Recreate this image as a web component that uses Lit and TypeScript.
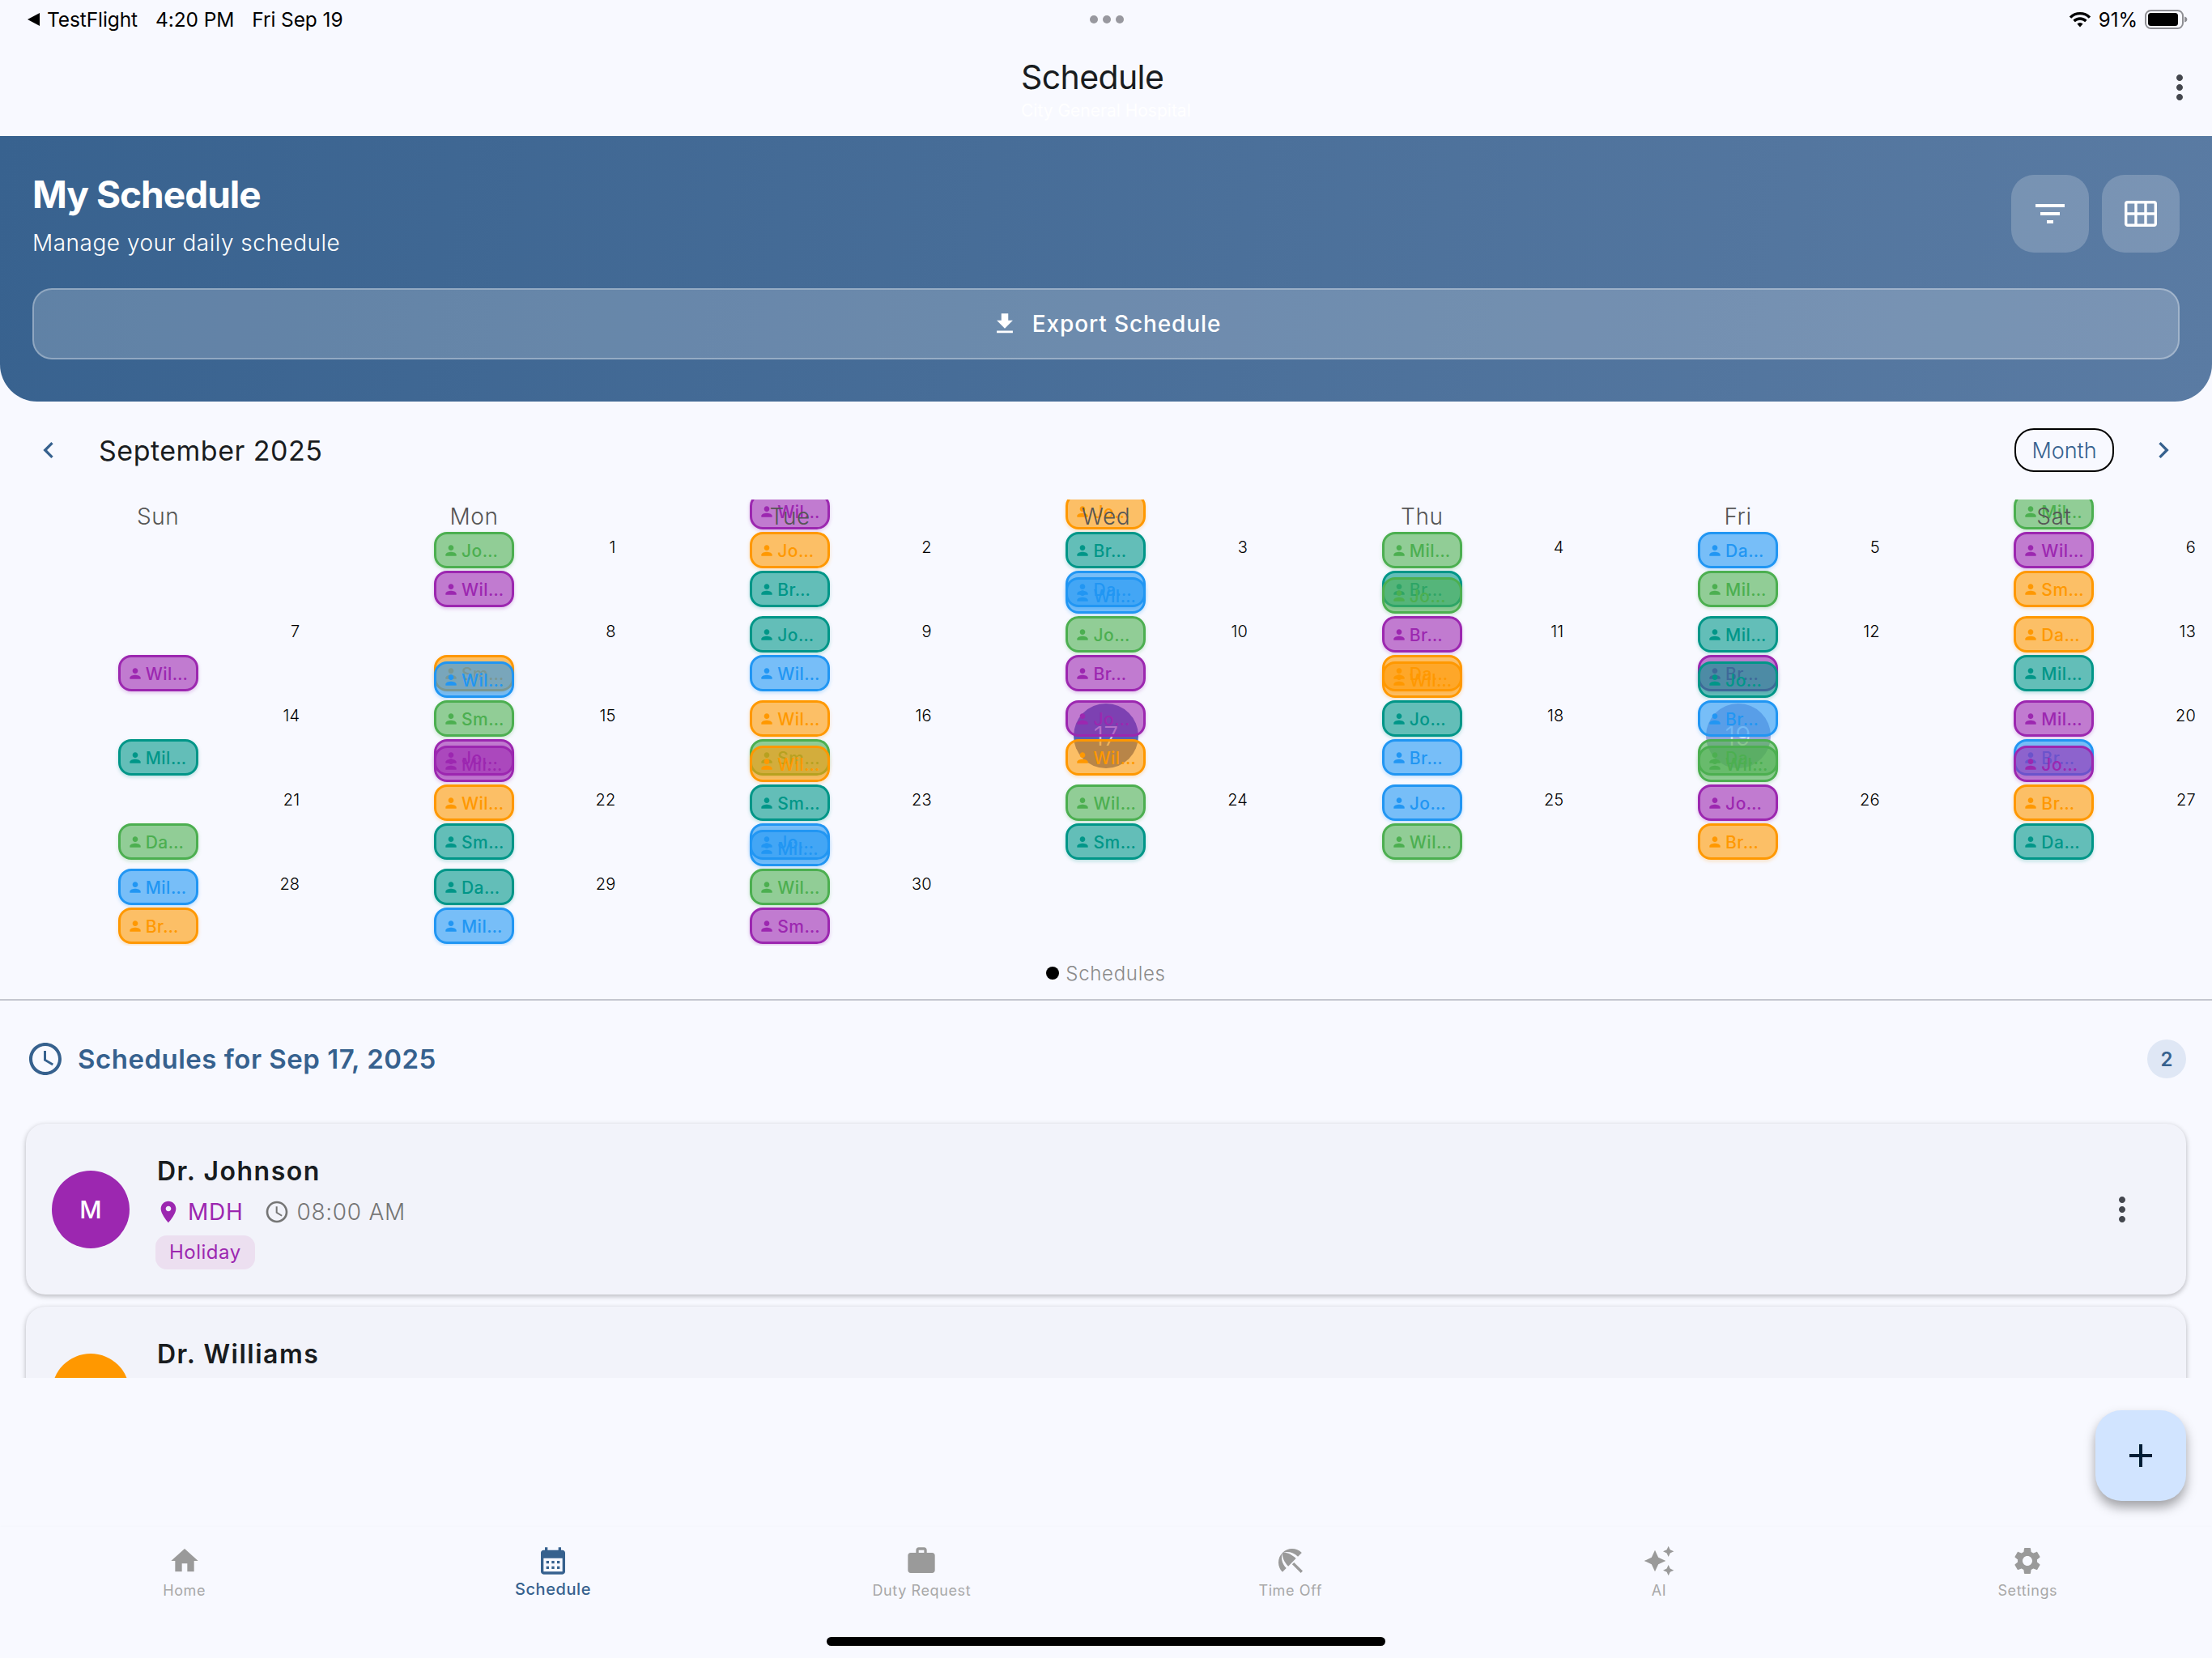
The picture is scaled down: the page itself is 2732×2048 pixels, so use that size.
import { LitElement, html, css } from "lit";
import { customElement } from "lit/decorators.js";

const P = {
  home: "M10 20v-6h4v6h5v-8h3L12 3 2 12h3v8z",
  cal: "M19 4h-1V2h-2v2H8V2H6v2H5c-1.11 0-1.99.9-1.99 2L3 20c0 1.1.89 2 2 2h14c1.1 0 2-.9 2-2V6c0-1.1-.9-2-2-2zm0 16H5V10h14v10zM9 14H7v-2h2v2zm4 0h-2v-2h2v2zm4 0h-2v-2h2v2zm-8 4H7v-2h2v2zm4 0h-2v-2h2v2zm4 0h-2v-2h2v2z",
  work: "M20 6h-4V4c0-1.11-.89-2-2-2h-4c-1.11 0-2 .89-2 2v2H4c-1.11 0-1.99.89-1.99 2L2 19c0 1.11.89 2 2 2h16c1.11 0 2-.89 2-2V8c0-1.11-.89-2-2-2zm-6 0h-4V4h4v2z",
  beach: "M13.127 14.56l1.43-1.43 6.44 6.443L19.57 21zm4.293-5.73l2.86-2.86c-3.95-3.95-10.35-3.96-14.3-.02 3.93-1.3 8.31-.25 11.44 2.88zM5.95 5.98c-3.94 3.95-3.93 10.35.02 14.3l2.86-2.86C5.7 14.29 4.65 9.91 5.95 5.98zm.02-.02l-.01.01c-.38 3.01 1.17 6.88 4.3 10.02l5.73-5.73c-3.13-3.13-7.01-4.68-10.02-4.3z",
  ai: "M19 9l1.25-2.75L23 5l-2.75-1.25L19 1l-1.25 2.75L15 5l2.75 1.25L19 9zm-7.5.5L9 4 6.5 9.5 1 12l5.5 2.5L9 20l2.5-5.5L17 12l-5.5-2.5zM19 15l-1.25 2.75L15 19l2.75 1.25L19 23l1.25-2.75L23 19l-2.75-1.25L19 15z",
  gear: "M19.14 12.94c.04-.3.06-.61.06-.94 0-.32-.02-.64-.07-.94l2.03-1.58c.18-.14.23-.41.12-.61l-1.92-3.32c-.12-.22-.37-.29-.59-.22l-2.39.96c-.5-.38-1.03-.7-1.62-.94l-.36-2.54c-.04-.24-.24-.41-.48-.41h-3.84c-.24 0-.43.17-.47.41l-.36 2.54c-.59.24-1.13.57-1.62.94l-2.39-.96c-.22-.08-.47 0-.59.22L2.74 8.87c-.12.21-.08.47.12.61l2.03 1.58c-.05.3-.09.63-.09.94s.02.64.07.94l-2.03 1.58c-.18.14-.23.41-.12.61l1.92 3.32c.12.22.37.29.59.22l2.39-.96c.5.38 1.03.7 1.62.94l.36 2.54c.05.24.24.41.48.41h3.84c.24 0 .44-.17.47-.41l.36-2.54c.59-.24 1.13-.56 1.62-.94l2.39.96c.22.08.47 0 .59-.22l1.92-3.32c.12-.22.07-.47-.12-.61l-2.01-1.58zM12 15.6c-1.98 0-3.6-1.62-3.6-3.6s1.62-3.6 3.6-3.6 3.6 1.62 3.6 3.6-1.62 3.6-3.6 3.6z",
  person: "M12 12c2.21 0 4-1.79 4-4s-1.79-4-4-4-4 1.79-4 4 1.79 4 4 4zm0 2c-2.67 0-8 1.34-8 4v2h16v-2c0-2.66-5.33-4-8-4z",
  filter: "M10 18h4v-2h-4v2zM3 6v2h18V6H3zm3 7h12v-2H6v2z",
  download: "M5 20h14v-2H5v2zM19 9h-4V3H9v6H5l7 7 7-7z",
  pin: "M12 2C8.13 2 5 5.13 5 9c0 5.25 7 13 7 13s7-7.75 7-13c0-3.87-3.13-7-7-7zm0 9.5c-1.38 0-2.5-1.12-2.5-2.5s1.12-2.5 2.5-2.5 2.5 1.12 2.5 2.5-1.12 2.5-2.5 2.5z",
  clock: "M11.99 2C6.47 2 2 6.48 2 12s4.47 10 9.99 10C17.52 22 22 17.52 22 12S17.52 2 11.99 2zM12 20c-4.42 0-8-3.58-8-8s3.58-8 8-8 8 3.58 8 8-3.58 8-8 8zm.5-13H11v6l5.25 3.15.75-1.23-4.5-2.67z",
  more: "M12 8c1.1 0 2-.9 2-2s-.9-2-2-2-2 .9-2 2 .9 2 2 2zm0 2c-1.1 0-2 .9-2 2s.9 2 2 2 2-.9 2-2-.9-2-2-2zm0 6c-1.1 0-2 .9-2 2s.9 2 2 2 2-.9 2-2-.9-2-2-2z",
  left: "M15.41 7.41L14 6l-6 6 6 6 1.41-1.41L10.83 12z",
  right: "M10 6L8.59 7.41 13.17 12l-4.58 4.59L10 18l6-6z",
  plus: "M19 13h-6v6h-2v-6H5v-2h6V5h2v6h6v2z",
};

function icon(d: string, size: number) {
  return html`<svg class="ic" width=${size} height=${size} viewBox="0 0 24 24" fill="currentColor"><path d=${d}></path></svg>`;
}

const COLORS: Record<string, string> = { p: "purple", g: "green", t: "teal", b: "blue", o: "orange" };

// Each cell: "offset:label:colour" entries, rows of the month from top to bottom.
const MONTH: { day: number | null; chips: string[]; mark?: "selected" | "today" }[][] = [
  [
    { day: null, chips: [] },
    { day: 7, chips: ["48:Wil:p"] },
    { day: 14, chips: ["48:Mil:t"] },
    { day: 21, chips: ["48:Da:g"] },
    { day: 28, chips: ["0:Mil:b", "48:Br:o"] },
  ],
  [
    { day: 1, chips: ["0:Jo:g", "48:Wil:p"] },
    { day: 8, chips: ["48:Sm:o", "56:Wil:b"] },
    { day: 15, chips: ["0:Sm:g", "48:Jo:p", "56:Mil:p"] },
    { day: 22, chips: ["0:Wil:o", "48:Sm:t"] },
    { day: 29, chips: ["0:Da:t", "48:Mil:b"] },
  ],
  [
    { day: 2, chips: ["-48:Wil:p", "0:Jo:o", "48:Br:t"] },
    { day: 9, chips: ["0:Jo:t", "48:Wil:b"] },
    { day: 16, chips: ["0:Wil:o", "48:Sm:g", "56:Wil:o"] },
    { day: 23, chips: ["0:Sm:t", "48:Jo:b", "56:Mil:b"] },
    { day: 30, chips: ["0:Wil:g", "48:Sm:p"] },
  ],
  [
    { day: 3, chips: ["-48:Jo:o", "0:Br:t", "48:Da:b", "56:Wil:b"] },
    { day: 10, chips: ["0:Jo:g", "48:Br:p"] },
    { day: 17, chips: ["0:Jo:p", "48:Wil:o"], mark: "selected" },
    { day: 24, chips: ["0:Wil:g", "48:Sm:t"] },
    { day: null, chips: [] },
  ],
  [
    { day: 4, chips: ["0:Mil:g", "48:Br:t", "56:Jo:g"] },
    { day: 11, chips: ["0:Br:p", "48:Da:o", "56:Wil:o"] },
    { day: 18, chips: ["0:Jo:t", "48:Br:b"] },
    { day: 25, chips: ["0:Jo:b", "48:Wil:g"] },
    { day: null, chips: [] },
  ],
  [
    { day: 5, chips: ["0:Da:b", "48:Mil:g"] },
    { day: 12, chips: ["0:Mil:t", "48:Br:p", "56:Jo:t"] },
    { day: 19, chips: ["0:Br:b", "48:Da:g", "56:Wil:g"], mark: "today" },
    { day: 26, chips: ["0:Jo:p", "48:Br:o"] },
    { day: null, chips: [] },
  ],
  [
    { day: 6, chips: ["-48:Mil:g", "0:Wil:p", "48:Sm:o"] },
    { day: 13, chips: ["0:Da:o", "48:Mil:t"] },
    { day: 20, chips: ["0:Mil:p", "48:Br:b", "56:Jo:p"] },
    { day: 27, chips: ["0:Br:o", "48:Da:t"] },
    { day: null, chips: [] },
  ],
];

const NAV = [
  { label: "Home", d: P.home },
  { label: "Schedule", d: P.cal, active: true },
  { label: "Duty Request", d: P.work },
  { label: "Time Off", d: P.beach },
  { label: "AI", d: P.ai },
  { label: "Settings", d: P.gear },
];

const DAYS = ["Sun", "Mon", "Tue", "Wed", "Thu", "Fri", "Sat"];

@customElement("app-root")
export class AppRoot extends LitElement {
  static styles = css`
    :host { display: block; width: 2732px; height: 2048px; background: #f8f9ff; font-family: Inter, "Liberation Sans", sans-serif; color: #191c20; position: relative; overflow: hidden; }
    *, *::before, *::after { box-sizing: border-box; }
    .ic { display: block; flex: none; }
    .page { display: flex; flex-direction: column; height: 2048px; }

    .status { height: 48px; display: grid; grid-template-columns: 1fr auto 1fr; align-items: center; padding: 0 30px 0 34px; font-size: 24.5px; color: #000; }
    .status-l { display: flex; align-items: center; gap: 22px; letter-spacing: -0.1px; }
    .back { display: flex; align-items: center; gap: 9px; }
    .tri { width: 0; height: 0; border-top: 8px solid transparent; border-bottom: 8px solid transparent; border-right: 15px solid #000; }
    .dots { display: flex; gap: 6px; margin-left: -2px; }
    .dots i { width: 10px; height: 10px; border-radius: 50%; background: #98989f; }
    .status-r { display: flex; align-items: center; justify-content: flex-end; gap: 9px; font-size: 24px; }

    .appbar { height: 120px; display: flex; justify-content: center; position: relative; }
    .title-col { display: flex; flex-direction: column; align-items: flex-start; width: 210px; padding-top: 20px; }
    .title { font-size: 41px; line-height: 54px; letter-spacing: -0.6px; }
    .subtitle { font-size: 21px; line-height: 30px; color: #fff; white-space: nowrap; }
    .appbar .more { position: absolute; right: 16px; top: 36px; color: #44474e; }

    .hero { height: 328px; padding: 48px 40px 52px; border-radius: 0 0 46px 46px; background: linear-gradient(100deg, #38628f 0%, #5a7ba3 100%); color: #fff; display: flex; flex-direction: column; gap: 44px; }
    .hero-top { display: flex; justify-content: space-between; height: 96px; }
    .hero-text { margin-top: -4px; }
    .hero h1 { margin: 0; font-size: 46px; line-height: 56px; font-weight: 700; letter-spacing: -1px; }
    .hero p { margin: 14px 0 0; font-size: 28px; line-height: 36px; font-weight: 300; letter-spacing: 0.5px; }
    .hero-btns { display: flex; gap: 16px; }
    .hbtn { width: 96px; height: 96px; border-radius: 28px; background: rgba(255,255,255,.2); display: flex; align-items: center; justify-content: center; }
    .export { height: 88px; border-radius: 24px; border: 2px solid rgba(255,255,255,.3); background: rgba(255,255,255,.2); display: flex; align-items: center; justify-content: center; gap: 17px; font-size: 28px; font-weight: 500; letter-spacing: 0.9px; }

    .calnav { height: 121px; padding: 0 40px 1px; display: flex; align-items: center; color: #36618e; }
    .calnav .month { margin-left: 42px; flex: 1; font-size: 34px; color: #191c20; font-weight: 400; letter-spacing: 0.5px; }
    .pill { width: 123px; height: 54px; border: 2px solid #000; border-radius: 24px; display: flex; align-items: center; justify-content: center; font-size: 27px; font-weight: 300; margin-right: 41px; }

    .calendar { height: 551px; overflow: hidden; }
    .weekdays { display: grid; grid-template-columns: repeat(7, 1fr); height: 40px; position: relative; z-index: 2; }
    .weekdays span { text-align: center; font-size: 28px; line-height: 42px; font-weight: 300; color: #555; letter-spacing: 0.6px; }
    .grid { display: grid; grid-template-columns: repeat(7, 1fr); grid-auto-flow: column; grid-template-rows: repeat(5, 104px); }
    .cell { position: relative; padding-right: 20px; text-align: right; font-size: 20px; line-height: 39px; color: #000; font-weight: 300; letter-spacing: 0.2px; }
    .circle { position: absolute; left: 50%; top: 4px; width: 80px; height: 80px; margin-left: -40px; border-radius: 50%; display: flex; align-items: center; justify-content: center; font-size: 32px; font-weight: 300; color: rgba(255,255,255,.8); }
    .circle.selected { background: rgb(78,105,180); }
    .circle.today { background: rgb(170,170,215); }
    .chip { position: absolute; left: 50%; width: 99px; height: 45px; margin-left: -49.5px; border-radius: 16px; border: 3px solid var(--c); background: var(--bg); color: var(--c); box-shadow: 0 2px 4px var(--sh); display: flex; align-items: center; padding-left: 8px; gap: 3px; text-align: left; font-size: 21px; line-height: 24px; font-weight: 500; letter-spacing: 0.5px; white-space: nowrap; overflow: hidden; }
    .chip span { padding-top: 3px; }
    .purple { --c: #9c27b0; --bg: rgba(156,39,176,.6); --sh: rgba(156,39,176,.25); }
    .green { --c: #4caf50; --bg: rgba(76,175,80,.6); --sh: rgba(76,175,80,.25); }
    .teal { --c: #009688; --bg: rgba(0,150,136,.6); --sh: rgba(0,150,136,.25); }
    .blue { --c: #2196f3; --bg: rgba(33,150,243,.6); --sh: rgba(33,150,243,.25); }
    .orange { --c: #ff9800; --bg: rgba(255,152,0,.6); --sh: rgba(255,152,0,.25); }

    .legend { height: 66px; padding-top: 2px; display: flex; align-items: center; justify-content: center; gap: 8px; font-size: 24px; font-weight: 300; color: #8a8a8a; letter-spacing: 0.7px; }
    .legend i { width: 16px; height: 16px; border-radius: 50%; background: #000; }
    .divider { height: 2px; background: #c4c6cf; flex: none; }

    .sec { height: 144px; flex: none; padding: 0 32px; display: flex; align-items: center; gap: 16px; color: #36618e; }
    .sec .t { flex: 1; font-size: 33px; font-weight: 600; letter-spacing: 0.5px; }
    .badge { width: 48px; height: 48px; border-radius: 50%; background: #dfe7f5; display: flex; align-items: center; justify-content: center; font-size: 24px; font-weight: 600; }

    .list { height: 322px; flex: none; overflow: hidden; padding: 8px 32px 0; display: flex; flex-direction: column; gap: 15px; }
    .card { height: 211px; flex: none; border-radius: 24px; background: #f2f3fa; box-shadow: 0 2px 6px rgba(0,0,0,.28); padding: 0 55px 0 32px; display: flex; align-items: center; gap: 32px; }
    .avatar { width: 96px; height: 96px; border-radius: 50%; flex: none; color: #fff; display: flex; align-items: center; justify-content: center; font-size: 30px; font-weight: 500; }
    .info { align-self: flex-start; padding-top: 39px; flex: 1; }
    .name { font-size: 32px; line-height: 40px; font-weight: 600; letter-spacing: 1.5px; padding-left: 2px; }
    .meta { display: flex; align-items: center; height: 36px; margin-top: 12px; font-size: 28px; letter-spacing: 0.7px; color: #757575; font-weight: 300; }
    .meta .hosp { color: #9c27b0; font-weight: 400; margin: 0 26px 0 8px; }
    .meta .pin { color: #9c27b0; }
    .meta .tm { margin-left: 8px; }
    .tag { display: inline-block; margin-top: 11px; height: 42px; line-height: 42px; padding: 0 17px; border-radius: 14px; background: #ecdff0; color: #9c27b0; font-size: 24px; letter-spacing: 0.5px; }
    .card .more { color: #44474e; }

    .spacer { flex: 1; background: #f8f9ff; }
    .fab { position: absolute; left: 2588px; top: 1742px; width: 112px; height: 112px; border-radius: 32px; background: #d1e4ff; color: #001d36; display: flex; align-items: center; justify-content: center; box-shadow: 0 8px 14px rgba(0,0,0,.35); }

    .nav { height: 162px; flex: none; display: flex; flex-direction: column; align-items: center; box-shadow: 0 -1px 2px rgba(0,0,0,.015); }
    .tabs { width: 100%; display: grid; grid-template-columns: repeat(6, 1fr); }
    .tab { height: 90px; padding-top: 22px; display: flex; flex-direction: column; align-items: center; gap: 6px; color: #9a9a9a; font-size: 18px; line-height: 22px; letter-spacing: 0.6px; }
    .tab span { color: #a8a8a8; font-weight: 400; }
    .tab.on { color: #36618e; gap: 4px; }
    .tab.on span { color: #36618e; font-size: 20px; font-weight: 500; letter-spacing: 0.6px; }
    .indicator { width: 690px; height: 11px; border-radius: 6px; background: #000; margin-top: 46px; }
  `;

  private renderCell(cell: { day: number | null; chips: string[]; mark?: string }) {
    return html`<div class="cell">
      ${cell.mark
        ? html`<div class="circle ${cell.mark}">${cell.day}</div>`
        : cell.day ?? ""}
      ${cell.chips.map((c) => {
        const [top, label, col] = c.split(":");
        return html`<div class="chip ${COLORS[col]}" style="top:${top}px">${icon(P.person, 20)}<span>${label}…</span></div>`;
      })}
    </div>`;
  }

  private renderCard(init: string, color: string, name: string, hosp: string, time: string, tag: string) {
    return html`<div class="card">
      <div class="avatar" style="background:${color}">${init}</div>
      <div class="info">
        <div class="name">${name}</div>
        <div class="meta">
          <span class="pin">${icon(P.pin, 32)}</span>
          <span class="hosp">${hosp}</span>
          ${icon(P.clock, 32)}
          <span class="tm">${time}</span>
        </div>
        <div class="tag">${tag}</div>
      </div>
      <div class="more">${icon(P.more, 48)}</div>
    </div>`;
  }

  render() {
    return html`<div class="page">
      <div class="status">
        <div class="status-l">
          <div class="back"><div class="tri"></div><span>TestFlight</span></div>
          <span>4:20 PM</span>
          <span>Fri Sep 19</span>
        </div>
        <div class="dots"><i></i><i></i><i></i></div>
        <div class="status-r">
          <svg width="28" height="20" viewBox="0 0 28 20" fill="none" stroke="#000" stroke-width="3.4">
            <path d="M2 7.6a17 17 0 0 1 24 0"></path>
            <path d="M6.6 12a10.5 10.5 0 0 1 14.8 0"></path>
            <path d="M10.4 15.6a5 5 0 0 1 7.2 0L14 19.5z" fill="#000" stroke="none"></path>
          </svg>
          <span>91%</span>
          <svg width="53" height="24" viewBox="0 0 53 24">
            <rect x="1" y="1" width="46" height="22" rx="6.5" fill="none" stroke="#8e8e93" stroke-width="2"></rect>
            <rect x="4" y="4" width="37" height="16" rx="3.5" fill="#000"></rect>
            <path d="M49 8.5c2 .5 3.4 1.8 3.4 3.5s-1.4 3-3.4 3.5z" fill="#8e8e93"></path>
          </svg>
        </div>
      </div>

      <div class="appbar">
        <div class="title-col">
          <div class="title">Schedule</div>
          <div class="subtitle">City General Hospital</div>
        </div>
        <div class="more">${icon(P.more, 48)}</div>
      </div>

      <div class="hero">
        <div class="hero-top">
          <div class="hero-text">
            <h1>My Schedule</h1>
            <p>Manage your daily schedule</p>
          </div>
          <div class="hero-btns">
            <div class="hbtn">${icon(P.filter, 48)}</div>
            <div class="hbtn">
              <svg class="ic" width="48" height="48" viewBox="0 0 24 24" fill="none" stroke="#fff" stroke-width="1.7">
                <rect x="2.85" y="4.85" width="18.3" height="14.3" rx="1"></rect>
                <path d="M9 5v14M15 5v14M3 12h18"></path>
              </svg>
            </div>
          </div>
        </div>
        <div class="export">${icon(P.download, 34)}<span>Export Schedule</span></div>
      </div>

      <div class="calnav">
        <div class="nav-l">${icon(P.left, 40)}</div>
        <div class="month">September 2025</div>
        <div class="pill">Month</div>
        <div class="nav-r">${icon(P.right, 40)}</div>
      </div>

      <div class="calendar">
        <div class="weekdays">${DAYS.map((d) => html`<span>${d}</span>`)}</div>
        <div class="grid">${MONTH.map((col) => col.map((c) => this.renderCell(c)))}</div>
      </div>

      <div class="legend"><i></i><span>Schedules</span></div>
      <div class="divider"></div>

      <div class="sec">
        ${icon(P.clock, 48)}
        <div class="t">Schedules for Sep 17, 2025</div>
        <div class="badge">2</div>
      </div>

      <div class="list">
        ${this.renderCard("M", "#9c27b0", "Dr. Johnson", "MDH", "08:00 AM", "Holiday")}
        ${this.renderCard("W", "#ff9800", "Dr. Williams", "MDH", "08:00 AM", "Holiday")}
      </div>

      <div class="spacer"></div>

      <div class="nav">
        <div class="tabs">
          ${NAV.map((n) => html`<div class="tab ${n.active ? "on" : ""}">${icon(n.d, 40)}<span>${n.label}</span></div>`)}
        </div>
        <div class="indicator"></div>
      </div>
    </div>
    <div class="fab">${icon(P.plus, 48)}</div>`;
  }
}
